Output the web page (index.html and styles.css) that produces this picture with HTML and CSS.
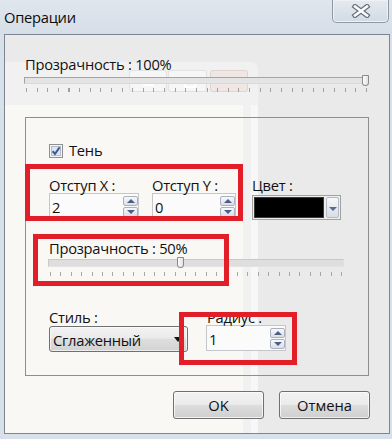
FILE: index.html
```html
<!DOCTYPE HTML>
<html>
<head>
<meta charset="utf-8">
<title>Операции</title>
<link rel="stylesheet" href="styles.css">
</head>
<body>
<div class="dialog">
	<div class="titlebar">
		<span class="title">Операции</span>
		<div class="close">
			<svg width="20" height="14" viewBox="0 0 20 14">
				<path d="M4 2.5 L16 11.5 M16 2.5 L4 11.5" stroke="#66717e" stroke-width="5" stroke-linecap="square" fill="none"/>
				<path d="M4 2.5 L16 11.5 M16 2.5 L4 11.5" stroke="#fbfcfd" stroke-width="2.6" stroke-linecap="square" fill="none"/>
			</svg>
		</div>
	</div>

	<div class="client">
		<!-- окно позади (просвечивает) -->
		<div class="ghost-win"></div>
		<div class="ghost-panel"></div>
		<div class="ghost-edge"></div>
		<div class="ghost-btn ghost-min"></div>
		<div class="ghost-btn ghost-max"></div>
		<div class="ghost-btn ghost-cls"></div>

		<div class="caption">Прозрачность : 100%</div>
		<div class="slider slider-top">
			<div class="track"><span class="thumb" style="left:337px"></span></div>
			<div class="ticks"></div>
		</div>

		<div class="group">
			<label class="check">
				<svg width="14" height="14" viewBox="0 0 14 14">
					<rect x=".5" y=".5" width="13" height="13" fill="#f6f6f6" stroke="#8e8f8f"/>
					<rect x="2.5" y="2.5" width="9" height="9" fill="#dfe6f0" stroke="#b4bcc8"/>
					<path d="M3.6 7.2 L6 9.8 L10.6 3.4" stroke="#3d5b9b" stroke-width="2" fill="none"/>
				</svg>
				<span>Тень</span>
			</label>

			<div class="fields">
				<div class="field field-x">
					<div class="caption">Отступ X :</div>
					<div class="spin"><span class="val">2</span><span class="spin-btns"><i class="up"></i><i class="down"></i></span></div>
				</div>
				<div class="field field-y">
					<div class="caption">Отступ Y :</div>
					<div class="spin"><span class="val">0</span><span class="spin-btns"><i class="up"></i><i class="down"></i></span></div>
				</div>
				<div class="field field-color">
					<div class="caption">Цвет :</div>
					<div class="color-combo"><span class="swatch"></span><span class="drop"></span></div>
				</div>
			</div>

			<div class="caption caption-50">Прозрачность : 50%</div>
			<div class="slider slider-mid">
				<div class="track"><span class="thumb" style="left:128px"></span></div>
				<div class="ticks"></div>
			</div>

			<div class="fields fields-bottom">
				<div class="field field-style">
					<div class="caption">Стиль :</div>
					<div class="combo">Сглаженный</div>
				</div>
				<div class="field field-radius">
					<div class="caption">Радиус :</div>
					<div class="spin"><span class="val">1</span><span class="spin-btns"><i class="up"></i><i class="down"></i></span></div>
				</div>
			</div>

			<div class="mark mark-1"></div>
			<div class="mark mark-2"></div>
			<div class="mark mark-3"></div>
		</div>

		<div class="buttons">
			<button class="btn">OK</button>
			<button class="btn">Отмена</button>
		</div>
	</div>
</div>
</body>
</html>
```

FILE: styles.css
```css
*{margin:0;padding:0;box-sizing:border-box}
body{width:392px;height:439px;overflow:hidden;background:#d8e0e9;font-family:"Open Sans","Noto Sans",sans-serif;font-size:14.7px;letter-spacing:-.25px;color:#111}
.dialog{height:439px}

.titlebar{height:34px;display:flex;justify-content:space-between;align-items:flex-start;background:linear-gradient(#dfe6ee,#d6dee7)}
.title{padding:8px 0 0 4px;line-height:18px;color:#0c0c0c}
.close{width:57px;height:23px;margin-right:3px;border:1px solid #8d98a5;border-top:0;border-radius:0 0 5px 5px;background:linear-gradient(#e5eaf0,#d2dae3);box-shadow:inset 0 0 0 1px #eef2f6;display:flex;align-items:center;justify-content:center}

.client{position:relative;z-index:0;width:386px;height:400px;margin-left:4px;border:1px solid #7b8693;background:#eaeaea;padding:22px 0 0 20px}

/* просвечивающее окно */
.ghost-win{position:absolute;z-index:-1;left:0;top:27px;width:253px;bottom:0;background:rgba(255,255,255,.32);border-top-right-radius:7px}
.ghost-panel{position:absolute;z-index:-1;left:0;top:70px;width:238px;bottom:0;background:rgba(253,251,246,.62)}
.ghost-edge{position:absolute;z-index:-1;left:246px;top:70px;width:7px;bottom:0;background:rgba(255,255,255,.45)}
.ghost-btn{position:absolute;z-index:-1;top:35px;height:22px;border:1px solid rgba(0,0,0,.08);border-radius:3px;background:rgba(255,255,255,.35)}
.ghost-min{left:124px;width:38px}
.ghost-max{left:163px;width:39px}
.ghost-cls{left:205px;width:38px;background:rgba(236,150,130,.1)}
.ghost-min:after{content:"";position:absolute;left:13px;top:12px;width:11px;height:3px;background:#fff}
.ghost-max:after{content:"";position:absolute;left:15px;top:6px;width:8px;height:7px;border:2px solid #fff}

.caption{line-height:15px;white-space:nowrap}

.slider .track{position:relative;height:7px;border:1px solid;border-color:#a4a4a4 #d6d6d6 #d9d9d9 #a4a4a4;background:#e4e4e4}
.slider .thumb{position:absolute;top:-3px;width:7px;height:11px;border:1px solid #8a8a8a;border-radius:1px 1px 4px 4px;background:linear-gradient(to right,#fdfdfd,#e2e2e2)}
.slider .ticks{height:4px;margin:4px 0 0 2px;background:repeating-linear-gradient(to right,#a0a0a0 0 1px,transparent 1px 10.625px)}
.slider-top{width:344px;margin:5px 0 0 -1px}
.slider-top .ticks{width:342px}

.group{position:relative;width:344px;height:259px;margin-top:25px;border:1px solid #8e8e8e;padding:25px 0 0 23px}

.check{display:flex;align-items:center;gap:6px;height:15px;line-height:15px}
.check svg{display:block}

.fields{display:flex;align-items:flex-start;margin-top:20px}
.field-x{width:90px;margin-right:13px}
.field-y{width:84px;margin-right:16px}
.field-color{width:89px}

.spin{display:flex;justify-content:space-between;align-items:center;height:26px;border:1px solid #c3c6ca;background:#fbfbfb}
.spin .val{align-self:flex-start;padding:4px 0 0 2px;line-height:18px}
.spin-btns{display:flex;flex-direction:column;gap:1px}
.spin-btns i{position:relative;display:block;width:15px;height:10px;border:1px solid #a9b2be;border-radius:2px;background:linear-gradient(#f7f8fa,#d9dfe7)}
.spin-btns i:after{content:"";position:absolute;left:3px;border-left:4px solid transparent;border-right:4px solid transparent}
.spin-btns .up:after{top:2px;border-bottom:4px solid #4c5e85}
.spin-btns .down:after{top:2px;border-top:4px solid #4c5e85}

.color-combo{display:flex;gap:2px;height:25px;margin-top:2px;padding:1px;border:1px solid #a2a2a2;background:#eeeeee}
.color-combo .swatch{width:71px;background:#000;border:1px solid #3a3a3a}
.color-combo .drop{position:relative;width:13px;border:1px solid #b4bcc7;border-radius:2px;background:linear-gradient(#f6f7f9,#d8dee6)}
.color-combo .drop:after{content:"";position:absolute;left:2px;top:9px;border-left:4px solid transparent;border-right:4px solid transparent;border-top:4px solid #5a6b8f}

.caption-50{margin-top:21px}
.slider-mid{width:296px;margin:3px 0 0 -1px}
.slider-mid .track{height:8px;background:#dedede;border-color:#c9c9c9 #e2e2e2 #e2e2e2 #c9c9c9}
.slider-mid .ticks{width:293px;margin-top:5px;background:repeating-linear-gradient(to right,#a6a6a6 0 1px,transparent 1px 10.39px)}

.fields-bottom{margin-top:34px}
.field-style{width:139px;margin-right:18px}
.field-radius{width:80px}
.field-radius .caption{padding-left:1px}
.combo{position:relative;height:26px;margin-top:1px;padding:4px 0 0 3px;line-height:18px;border:1px solid #707070;border-radius:3px;background:linear-gradient(#f3f3f3,#ebebeb 45%,#dedede 52%,#d2d2d2);box-shadow:inset 0 0 0 1px rgba(255,255,255,.6)}
.combo:after{content:"";position:absolute;right:5px;top:10px;border-left:4px solid transparent;border-right:4px solid transparent;border-top:5px solid #111}
.field-radius .spin{margin-top:0}

.mark{position:absolute;border:5px solid #e21e28}
.mark-1{left:-1px;top:46px;width:218px;height:57px}
.mark-2{left:7px;top:116px;width:196px;height:52px}
.mark-3{left:153px;top:194px;width:118px;height:53px}

.buttons{display:flex;justify-content:flex-end;gap:15px;margin-top:15px;padding-right:19px}
.btn{width:91px;height:28px;font:inherit;color:#111;line-height:18px;border:1px solid #707070;border-radius:3px;background:linear-gradient(#f2f2f2,#ebebeb 48%,#dddddd 52%,#cfcfcf);box-shadow:inset 0 0 0 1px rgba(255,255,255,.7)}
```
